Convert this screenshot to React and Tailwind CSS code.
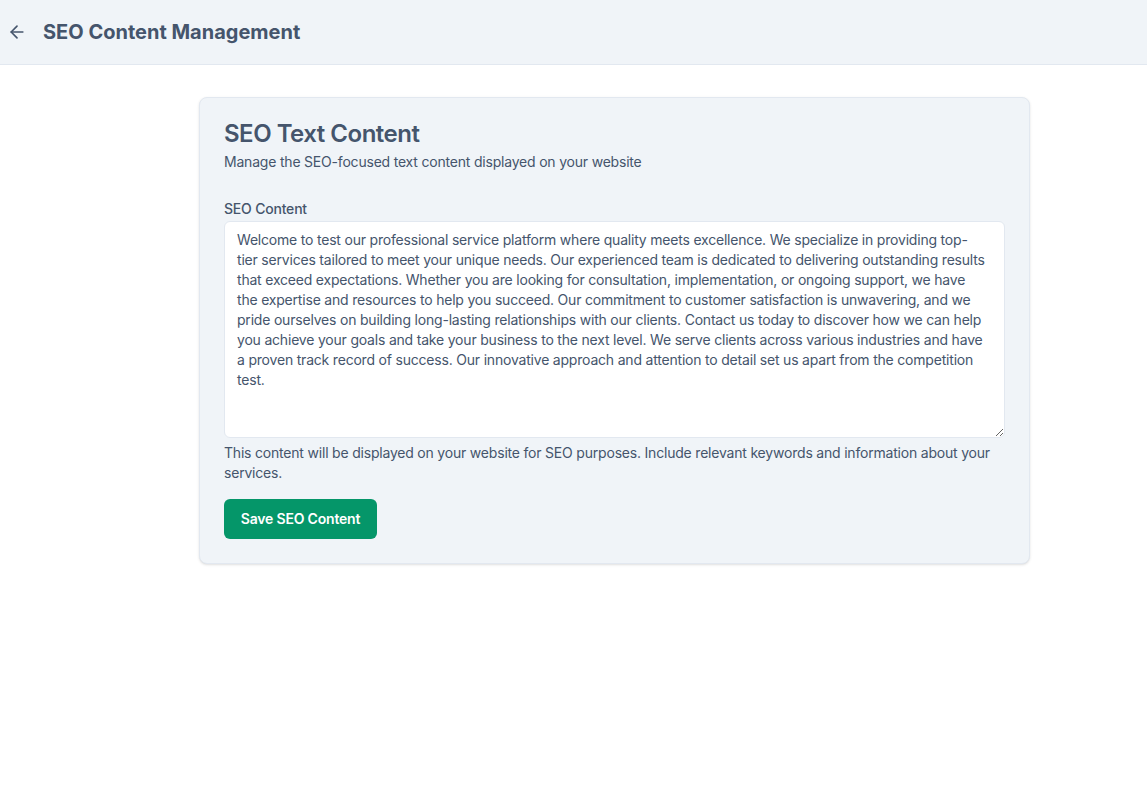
import { useState } from "react";

const initialText =
  "Welcome to test our professional service platform where quality meets excellence. We specialize in providing top-tier services tailored to meet your unique needs. Our experienced team is dedicated to delivering outstanding results that exceed expectations. Whether you are looking for consultation, implementation, or ongoing support, we have the expertise and resources to help you succeed. Our commitment to customer satisfaction is unwavering, and we pride ourselves on building long-lasting relationships with our clients. Contact us today to discover how we can help you achieve your goals and take your business to the next level. We serve clients across various industries and have a proven track record of success. Our innovative approach and attention to detail set us apart from the competition test.";

export default function App() {
  const [content, setContent] = useState(initialText);

  return (
    <div className="min-h-screen bg-white font-['Inter',sans-serif] text-slate-600">
      {/* Header */}
      <header className="h-[65px] bg-[#f0f4f8] border-b border-slate-200 flex items-center">
        <button className="ml-[7px] w-5 h-5 flex items-center justify-center text-slate-600">
          <svg width="20" height="20" viewBox="0 0 24 24" fill="none" stroke="currentColor" strokeWidth="2" strokeLinecap="round" strokeLinejoin="round">
            <path d="M19 12H5" />
            <path d="M12 19l-7-7 7-7" />
          </svg>
        </button>
        <h1 className="ml-[16px] text-xl font-bold text-slate-600">SEO Content Management</h1>
      </header>

      <main className="pt-8 pl-[199px]">
        {/* Card */}
        <div className="w-[831px] bg-[#f0f4f8] border border-slate-200 rounded-lg shadow-sm p-6">
          <h2 className="text-2xl font-semibold text-slate-600 leading-6 tracking-[-0.5px]">SEO Text Content</h2>
          <p className="text-sm text-slate-600 mt-[6px] tracking-[-0.2px]">Manage the SEO-focused text content displayed on your website</p>

          <div className="mt-[27px]">
            <label className="block text-sm font-medium text-slate-600 mb-[2px] tracking-[-0.2px]">SEO Content</label>
            <textarea
              value={content}
              onChange={(e) => setContent(e.target.value)}
              rows={10}
              className="block w-full h-[217px] bg-white border border-slate-200 rounded-md pl-3 pr-4 py-2 text-sm leading-5 tracking-[-0.2px] text-slate-600 font-['Inter',sans-serif] outline-none"
            />
            <p className="text-sm text-slate-600 mt-[5px] leading-5 tracking-[-0.2px]">
              This content will be displayed on your website for SEO purposes. Include relevant keywords and information about your services.
            </p>
          </div>

          <button className="mt-4 h-10 w-[153px] rounded-md bg-[#059669] text-white text-sm font-semibold tracking-[-0.2px]">
            Save SEO Content
          </button>
        </div>
      </main>
    </div>
  );
}
